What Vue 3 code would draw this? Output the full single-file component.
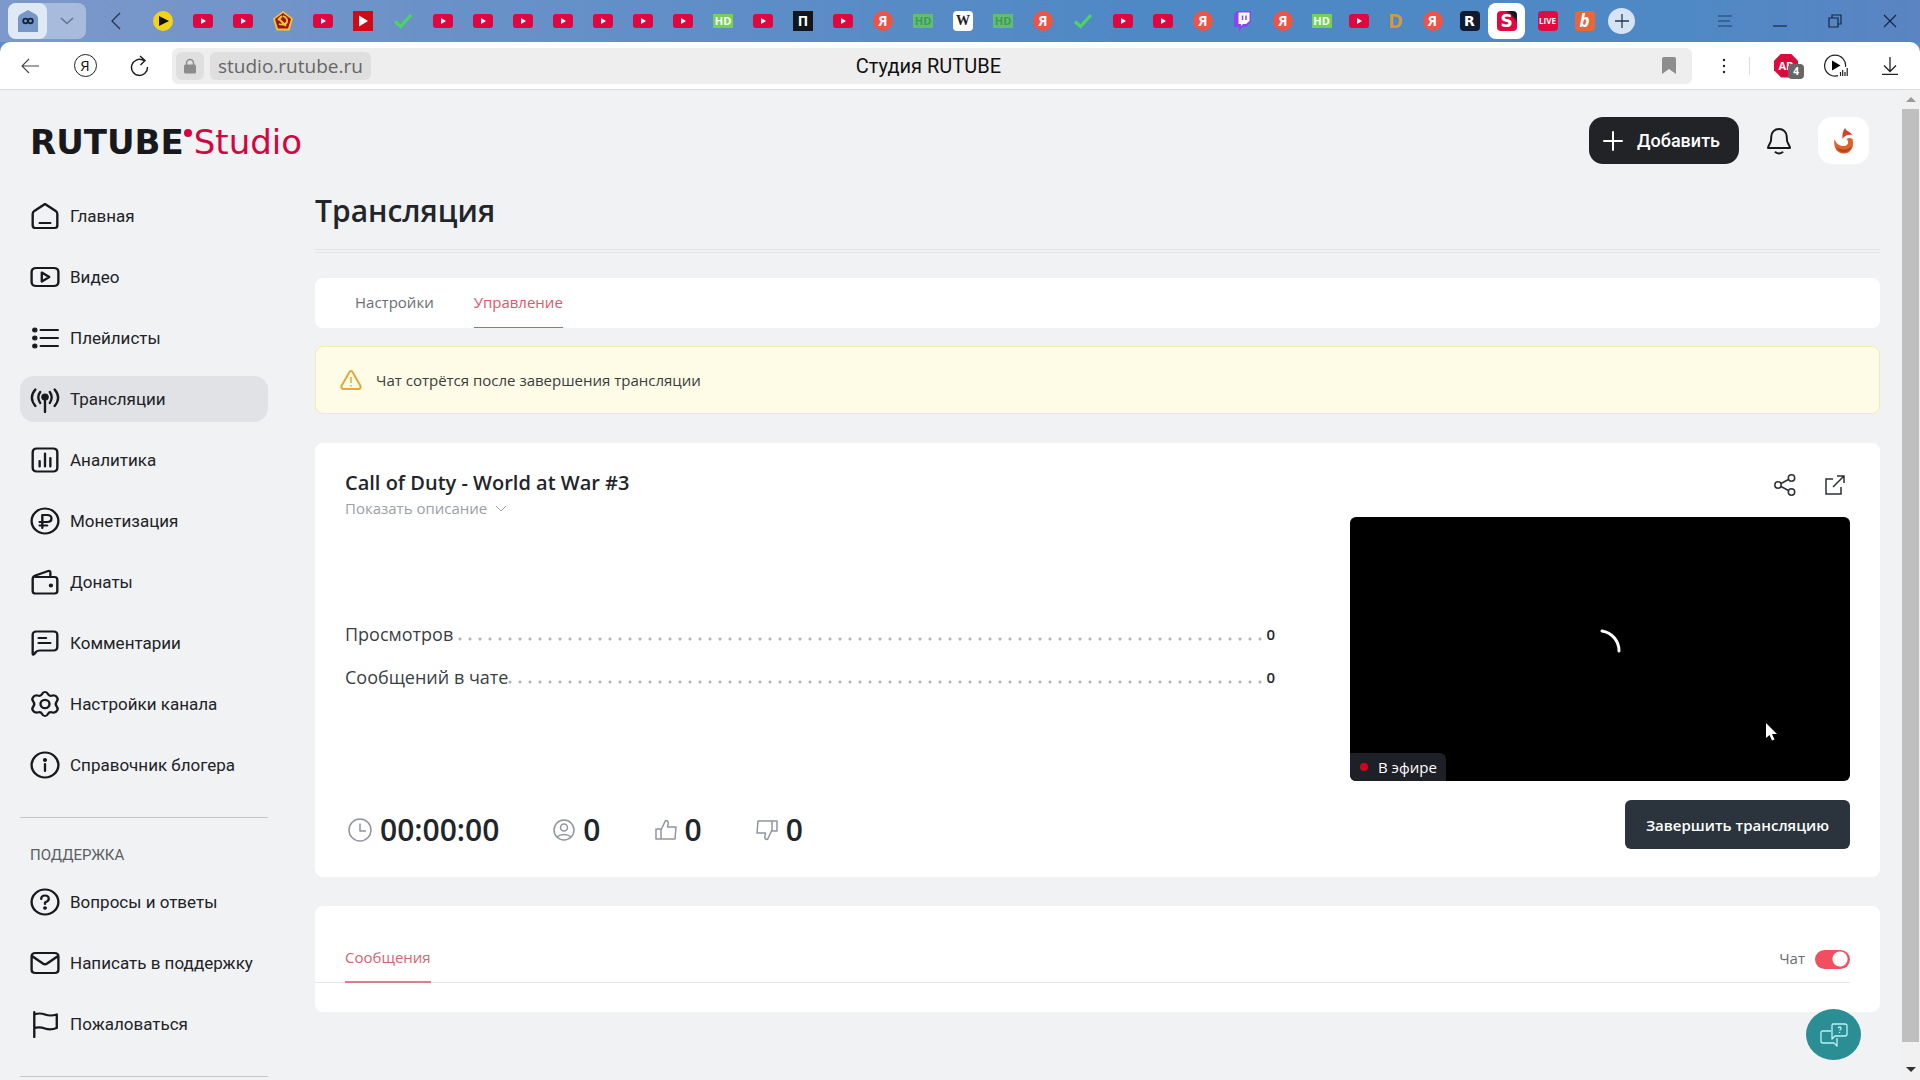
<!-- src/App.vue -->
<template>
  <div class="window">
    <!-- Browser tab strip -->
    <header class="tab-strip">
      <div class="tab-group">
        <button class="group-current" aria-label="Группа вкладок">
          <svg width="22" height="22" viewBox="0 0 22 22">
            <path d="M11 0 19 4.500Q21 6 21 8V22H1V8Q1 6 3 4.500Z" fill="#7798c6" />
            <circle cx="8.500" cy="11" r="2.300" fill="none" stroke="#16233c" stroke-width="1.800" />
            <circle cx="13.500" cy="11" r="2.300" fill="none" stroke="#16233c" stroke-width="1.800" />
          </svg>
        </button>
        <button class="group-more" aria-label="Список групп">
          <svg width="14" height="8" viewBox="0 0 14 8"><path d="M1 1 7 6.500 13 1" fill="none" stroke="#5f7596" stroke-width="1.600" /></svg>
        </button>
      </div>
      <button class="strip-back" aria-label="Прокрутить вкладки">
        <svg width="12" height="18" viewBox="0 0 12 18"><path d="M10 1 2 9l8 8" fill="none" stroke="#24364f" stroke-width="1.300" /></svg>
      </button>
      <nav class="tabs">
        <button
            v-for="(tab, idx) in tabs"
            :key="idx"
            class="tab"
            :class="{ narrow: idx > 28, active: tab === 'studio' }"
            :aria-label="'Вкладка ' + (idx + 1)"
        >
          <svg v-if="tab === 'yt'" width="20" height="14" viewBox="0 0 20 14">
            <rect width="20" height="14" rx="3" fill="#e0063f" />
            <path d="M8 4v6l5-3z" fill="#fff" />
          </svg>
          <svg v-else-if="tab === 'play'" width="20" height="20" viewBox="0 0 20 20">
            <circle cx="10" cy="10" r="10" fill="#f2d21b" />
            <path d="M6 5v10l10-5z" fill="#111" />
          </svg>
          <svg v-else-if="tab === 'ussr'" width="20" height="20" viewBox="0 0 20 20">
            <path d="M10 0 20 7.500 16.500 19.500H3.500L0 7.500z" fill="#f3c332" />
            <path d="M10 2 18 8 15 17.500H5L2 8z" fill="#a3141a" />
            <path d="M10 5q5 2 4 6-2 4-8 2M6 8l7 7M5 9l4-4" fill="none" stroke="#f5c936" stroke-width="1.800" />
          </svg>
          <svg v-else-if="tab === 'player'" width="20" height="20" viewBox="0 0 20 20">
            <rect width="20" height="20" fill="#cf0a15" />
            <path d="M6 4.500v11l9-5.500z" fill="#fff" />
          </svg>
          <svg v-else-if="tab === 'check'" width="20" height="16" viewBox="0 0 20 16">
            <path d="M2 8.500 7.500 13.500 18 2" fill="none" stroke="#4bd660" stroke-width="3.200" />
          </svg>
          <svg v-else-if="tab === 'twitch'" width="18" height="20" viewBox="0 0 18 20">
            <path d="M3 0H17V11L12 16H9L5 20V16H0V4z" fill="#8a45ee" />
            <path d="M4.500 1.500H15.500V10L12 13H9L7 15V13H4.500z" fill="#fff" />
            <path d="M8.500 4.500v4.500M12 4.500v4.500" stroke="#8a45ee" stroke-width="1.500" />
          </svg>
          <span v-else class="fav" :class="'fav-' + tab">{{ favText[tab] }}</span>
        </button>
      </nav>
      <button class="new-tab" aria-label="Новая вкладка">
        <svg width="14" height="14" viewBox="0 0 14 14"><path d="M7 0v14M0 7h14" stroke="#2a3a52" stroke-width="1.300" /></svg>
      </button>
      <div class="window-controls">
        <button aria-label="Меню">
          <svg width="14" height="12" viewBox="0 0 14 12"><path d="M0 1h14M0 6h12M0 11h14" stroke="#23406a" stroke-width="1.200" /></svg>
        </button>
        <button aria-label="Свернуть">
          <svg width="14" height="12" viewBox="0 0 14 12"><path d="M0 11h14" stroke="#16283f" stroke-width="1.200" /></svg>
        </button>
        <button aria-label="Восстановить">
          <svg width="14" height="14" viewBox="0 0 14 14"><path d="M1 4h9v9H1zM4 4V1h9v9h-3" fill="none" stroke="#16283f" stroke-width="1.200" /></svg>
        </button>
        <button aria-label="Закрыть">
          <svg width="14" height="14" viewBox="0 0 14 14"><path d="M1 1l12 12M13 1 1 13" stroke="#16283f" stroke-width="1.200" /></svg>
        </button>
      </div>
    </header>

    <!-- Browser toolbar -->
    <div class="toolbar-back">
      <div class="toolbar">
        <button class="tool" aria-label="Назад">
          <svg width="18" height="16" viewBox="0 0 18 16"><path d="M18 8H1M8 1 1 8l7 7" fill="none" stroke="#444" stroke-width="1.100" /></svg>
        </button>
        <button class="tool" aria-label="Яндекс"><span class="ya-ring">Я</span></button>
        <button class="tool" aria-label="Обновить">
          <svg width="20" height="22" viewBox="0 0 20 22"><path d="M17.500 12A8 8 0 1 1 13 5.200L15 5.500M10 1l5 4.500-4.500 4.500" fill="none" stroke="#222" stroke-width="1.500" /></svg>
        </button>
        <div class="address">
          <button class="lock" aria-label="Сведения о сайте">
            <svg width="14" height="16" viewBox="0 0 14 16">
              <path d="M3.500 8V5a3.500 3.500 0 0 1 7 0v3" fill="none" stroke="#8b8b8b" stroke-width="1.500" />
              <rect x="1" y="6.500" width="12" height="9" rx="1.500" fill="#8b8b8b" />
            </svg>
          </button>
          <button class="host">studio.rutube.ru</button>
          <span class="page-title">Студия RUTUBE</span>
          <button class="bookmark" aria-label="В закладки">
            <svg width="14" height="17" viewBox="0 0 14 17"><path d="M0 2q0-2 2-2h10q2 0 2 2v15l-7-5-7 5z" fill="#8d8d8d" /></svg>
          </button>
        </div>
        <button class="dots" aria-label="Ещё">
          <svg width="4" height="16" viewBox="0 0 4 16" fill="#222"><circle cx="2" cy="2" r="1.200" /><circle cx="2" cy="8" r="1.200" /><circle cx="2" cy="14" r="1.200" /></svg>
        </button>
        <span class="tool-divider"></span>
        <button class="adblock" aria-label="Adblock">
          <span class="adblock-sign">AB</span>
          <span class="adblock-count">4</span>
        </button>
        <button class="media" aria-label="Медиа">
          <svg width="24" height="24" viewBox="0 0 24 24">
            <path d="M14 21.700A10.500 10.500 0 1 1 21.500 13" fill="none" stroke="#222" stroke-width="1.200" />
            <path d="M8 6.500v10l8.500-5z" fill="#000" />
            <path d="M16.500 18v4M18.700 16v6M21 18v4M23.200 14v8" stroke="#222" stroke-width="1.200" />
          </svg>
        </button>
        <button class="download" aria-label="Загрузки">
          <svg width="16" height="18" viewBox="0 0 16 18"><path d="M8 0v14M2 8.500l6 6 6-6M0 17.300h16" fill="none" stroke="#222" stroke-width="1.300" /></svg>
        </button>
      </div>
    </div>

    <div class="viewport">
      <div class="site">
        <header class="site-header">
          <a class="logo" href="#"><b>RUTUBE</b><i class="logo-dot"></i><span>Studio</span></a>
          <div class="header-actions">
            <button class="add-button">
              <svg width="20" height="20" viewBox="0 0 20 20"><path d="M10 1v18M1 10h18" stroke="#fff" stroke-width="2" stroke-linecap="round" /></svg>
              Добавить
            </button>
            <button class="bell" aria-label="Уведомления">
              <svg width="26" height="28" viewBox="0 0 26 28" fill="none" stroke="#17191c" stroke-width="2" stroke-linecap="round" stroke-linejoin="round">
                <path d="M13 2C8.500 2 5.500 5.200 5.300 9.300L5 13.500C4.800 16 2.500 18 2 21H24C23.500 18 21.200 16 21 13.500L20.700 9.300C20.500 5.200 17.500 2 13 2Z" />
                <path d="M9.500 25.300Q13 27.800 16.500 25.300" />
              </svg>
            </button>
            <button class="avatar" aria-label="Профиль">
              <svg width="20" height="26" viewBox="0 0 20 26">
                <path d="M0.500 11C-1 21 4 25.500 10 25.500C17 25.500 20.500 19 18.500 11C16.500 9.500 14 10 12.500 11C15.500 13.500 14 18 10.500 18C6 18.500 2 16 0.500 11Z" fill="#e0622a" />
                <path d="M2 19C5 26 15 27 18.800 17C16 22 7 23 2 19Z" fill="#b8441c" />
                <path d="M8.500 11C8 6 9 3 11 0L12.500 2.500C15 3 16 5 18.500 6.500L14 7C11 7.500 10 9 8.500 11Z" fill="#cf432a" />
              </svg>
            </button>
          </div>
        </header>

        <div class="site-body">
          <aside class="sidebar">
            <nav class="menu">
              <a
                  v-for="item in menu"
                  :key="item.label"
                  class="menu-item"
                  :class="{ current: item.current }"
                  href="#"
              >
                <svg class="menu-icon" viewBox="0 0 28 28" preserveAspectRatio="none">
                  <path :d="item.line" />
                  <path v-if="item.fill" class="solid" :d="item.fill" />
                </svg>
                {{ item.label }}
              </a>
            </nav>
            <hr class="menu-rule" />
            <h2 class="menu-title">ПОДДЕРЖКА</h2>
            <nav class="menu">
              <a v-for="item in support" :key="item.label" class="menu-item" href="#">
                <svg class="menu-icon" viewBox="0 0 28 28" preserveAspectRatio="none">
                  <path :d="item.line" />
                  <path v-if="item.fill" class="solid" :d="item.fill" />
                </svg>
                {{ item.label }}
              </a>
            </nav>
            <hr class="menu-rule" />
          </aside>

          <main class="content">
            <h1>Трансляция</h1>
            <div class="double-rule"></div>

            <nav class="card page-tabs">
              <a href="#">Настройки</a>
              <a href="#" class="selected">Управление</a>
            </nav>

            <div class="notice">
              <svg width="22" height="20" viewBox="0 0 22 20" fill="none" stroke="#e0a93c" stroke-width="2" stroke-linejoin="round">
                <path d="M9.500 2Q11 0 12.500 2L20.500 16Q21 18.500 19 19H3Q1 18.500 1.500 16Z" />
                <path d="M11 7v6M11 15v1.500" stroke-width="1.500" />
              </svg>
              Чат сотрётся после завершения трансляции
            </div>

            <section class="card stream">
              <div class="stream-info">
                <h2>Call of Duty - World at War #3</h2>
                <button class="show-description">
                  Показать описание
                  <svg width="12" height="7" viewBox="0 0 12 7"><path d="M1 1l5 5 5-5" fill="none" stroke="#9a9fa8" /></svg>
                </button>
                <dl class="stats">
                  <div v-for="stat in stats" :key="stat.label" class="stat">
                    <dt>{{ stat.label }}</dt>
                    <dd>{{ stat.value }}</dd>
                  </div>
                </dl>
                <div class="meters">
                  <span class="meter">
                    <svg width="24" height="24" viewBox="0 0 24 24"><circle cx="12" cy="12" r="11" /><path d="M12 5.500V13h6" /></svg>
                    00:00:00
                  </span>
                  <span class="meter">
                    <svg width="22" height="22" viewBox="0 0 22 22"><circle cx="11" cy="11" r="10" /><circle cx="11" cy="8.500" r="3.500" /><path d="M3.800 18Q7 15.500 11 15.500T18.200 18" /></svg>
                    0
                  </span>
                  <span class="meter">
                    <svg width="22" height="22" viewBox="0 0 22 22"><path d="M1 10h5v10H1zM6 11l4.500-9.500Q14 1.500 13 5.500L12.500 8H21L20 20H6" /></svg>
                    0
                  </span>
                  <span class="meter">
                    <svg width="22" height="22" viewBox="0 0 22 22"><path d="M21 12h-5V2h5zM16 11l-4.500 9.500Q8 20.500 9 16.500L9.500 14H1L2 2h14" /></svg>
                    0
                  </span>
                </div>
              </div>

              <div class="stream-player">
                <div class="player-actions">
                  <button aria-label="Поделиться">
                    <svg width="22" height="22" viewBox="0 0 22 22"><circle cx="4" cy="11" r="3.200" /><circle cx="17.500" cy="4" r="3.200" /><circle cx="17.500" cy="18" r="3.200" /><path d="M7 9.500 14.500 5.500M7 12.500l7.500 4" /></svg>
                  </button>
                  <button aria-label="Открыть в новом окне">
                    <svg width="22" height="22" viewBox="0 0 22 22"><path d="M9 5H2v15h15v-7M9 13 20 2M13 2h7v7" /></svg>
                  </button>
                </div>
                <div class="player">
                  <svg class="spinner" width="46" height="46" viewBox="0 0 46 46"><path d="M25 5A20 20 0 0 1 42 25" fill="none" stroke="#fff" stroke-width="3" stroke-linecap="round" /></svg>
                  <span class="on-air">В эфире</span>
                  <svg class="pointer" width="12" height="18" viewBox="0 0 12 18"><path d="M1 0v15l3.500-3 2.500 5.500 2.500-1L7 11h5z" fill="#fff" /></svg>
                </div>
                <button class="finish">Завершить трансляцию</button>
              </div>
            </section>

            <section class="card messages">
              <div class="messages-bar">
                <a href="#" class="selected">Сообщения</a>
                <div class="chat-switch">
                  <label for="chat">Чат</label>
                  <input id="chat" v-model="chatEnabled" type="checkbox" />
                </div>
              </div>
            </section>
          </main>
        </div>
      </div>

      <div class="scrollbar">
        <i class="arrow-up"></i>
        <div class="thumb"></div>
        <i class="arrow-down"></i>
      </div>
    </div>

    <button class="help" aria-label="Помощь">
      <svg width="28" height="24" viewBox="0 0 28 24" fill="none" stroke="#b9f3f3" stroke-width="1.300" stroke-linejoin="round">
        <path d="M11 8H2.500Q1 8 1 9.500v8.500q0 2 2 2h11l3 3v-8" />
        <path d="M13 1h12q2 0 2 2v8q0 2-2 2H15l-3 3V3q0-2 1-2z" />
        <path d="M18 5q2-2 3 0 .3 1-1.500 2.500M19.500 9v1" />
      </svg>
    </button>
  </div>
</template>

<script setup>
import { ref } from 'vue'

// ─── BROWSER TABS ─────────────────────────────────────────────────────────────
const tabs = [
  'play', 'yt', 'yt', 'ussr', 'yt', 'player', 'check', 'yt', 'yt', 'yt',
  'yt', 'yt', 'yt', 'yt', 'hd', 'yt', 'pi', 'yt', 'ya', 'hddim',
  'wiki', 'hddim', 'ya', 'check', 'yt', 'yt', 'ya', 'twitch', 'ya',
  'hd', 'yt', 'dee', 'ya', 'rutube', 'studio', 'live', 'bee',
]

const favText = {
  hd: 'HD',
  hddim: 'HD',
  pi: 'П',
  ya: 'Я',
  wiki: 'W',
  dee: 'D',
  rutube: 'R',
  studio: 'S',
  live: 'LIVE',
  bee: 'b',
}

// ─── SIDEBAR ──────────────────────────────────────────────────────────────────
const ring = 'M14 1.500A12.500 12.500 0 1 1 14 26.500A12.500 12.500 0 1 1 14 1.500Z'

const menu = [
  { label: 'Главная', line: 'M14 2 24 9Q25.500 10 25.500 12V23.500Q25.500 26 23 26H5Q2.500 26 2.500 23.500V12Q2.500 10 4 9ZM9 21h10' },
  { label: 'Видео', line: 'M6 5H22Q26.500 5 26.500 9V19Q26.500 23 22 23H6Q1.500 23 1.500 19V9Q1.500 5 6 5ZM11 9.500 18 14 11 18.500Z' },
  {
    label: 'Плейлисты',
    line: 'M10 6H26M10 14H26M10 22H26',
    fill: 'M2.500 6a2 2 0 1 0 4 0a2 2 0 1 0-4 0M2.500 14a2 2 0 1 0 4 0a2 2 0 1 0-4 0M2.500 22a2 2 0 1 0 4 0a2 2 0 1 0-4 0',
  },
  {
    label: 'Трансляции',
    current: true,
    line: 'M14 13V27M9.500 7Q6 12 9.500 18M18.500 7Q22 12 18.500 18M5 4.500Q-1.500 12.500 5 21M23 4.500Q29.500 12.500 23 21',
    fill: 'M11 12a3 3 0 1 0 6 0a3 3 0 1 0-6 0',
  },
  { label: 'Аналитика', line: 'M6.500 2.500H21.500Q25.500 2.500 25.500 6.500V21.500Q25.500 25.500 21.500 25.500H6.500Q2.500 25.500 2.500 21.500V6.500Q2.500 2.500 6.500 2.500ZM9 15V20.500M14 7.500V20.500M19 12V20.500' },
  { label: 'Монетизация', line: ring + 'M11.500 21V8H16Q20 8 20 11.500T16 15H9M9 18.500H16' },
  {
    label: 'Донаты',
    line: 'M5 9H23Q25.500 9 25.500 12V23Q25.500 25.500 23 25.500H5Q2.500 25.500 2.500 23V11Q2.500 8.500 5 7.500L17 3Q19 2.500 19 4.500V9',
    fill: 'M18 17.500a1.500 1.500 0 1 0 3 0a1.500 1.500 0 1 0-3 0',
  },
  { label: 'Комментарии', line: 'M6 2.500H22Q25.500 2.500 25.500 6V17.500Q25.500 21.500 22 21.500H9Q7 21.500 5.500 23L4 25Q2.500 26.500 2.500 24.500V6Q2.500 2.500 6 2.500ZM8 9H15M8 14H19' },
  {
    label: 'Настройки канала',
    line: 'M14 2Q16 2 16.700 4Q18 6.500 21 5.500Q24 5 25.300 7.500Q26.500 9.500 25 11.300Q23 14 25 16.700Q26.500 18.500 25.300 20.500Q24 23 21 22.500Q18 21.500 16.700 24Q16 26 14 26T11.300 24Q10 21.500 7 22.500Q4 23 2.700 20.500Q1.500 18.500 3 16.700Q5 14 3 11.300Q1.500 9.500 2.700 7.500Q4 5 7 5.500Q10 6.500 11.300 4Q12 2 14 2ZM14 9.800A4.200 4.200 0 1 1 14 18.200A4.200 4.200 0 1 1 14 9.800Z',
  },
  {
    label: 'Справочник блогера',
    line: ring + 'M14 13V20',
    fill: 'M12.600 9a1.400 1.400 0 1 0 2.800 0a1.400 1.400 0 1 0-2.800 0',
  },
]

const support = [
  {
    label: 'Вопросы и ответы',
    line: ring + 'M10.500 11Q10.500 7.500 14 7.500T17.500 11Q17.500 13 14 14.500V16',
    fill: 'M12.700 20a1.300 1.300 0 1 0 2.600 0a1.300 1.300 0 1 0-2.600 0',
  },
  { label: 'Написать в поддержку', line: 'M5 4H23Q26.500 4 26.500 7.500V20.500Q26.500 24 23 24H5Q1.500 24 1.500 20.500V7.500Q1.500 4 5 4ZM2.500 7.500 12 14.500Q14 16 16 14.500L25.500 7.500' },
  { label: 'Пожаловаться', line: 'M4 2V27M4 4.500Q9 2.500 14 4.500T25 4.500V18Q19 20.500 14 18.500T4 18' },
]

// ─── STREAM ───────────────────────────────────────────────────────────────────
const stats = [
  { label: 'Просмотров', value: 0 },
  { label: 'Сообщений в чате', value: 0 },
]

const chatEnabled = ref(true)
</script>

<style>
body {
  margin: 0;
  background: #f1f2f4;
}
</style>

<style scoped>
.window {
  display: flex;
  flex-direction: column;
  min-height: 100vh;
  font-family: 'Open Sans', 'Noto Sans', sans-serif;
  color: #22262b;
}

button {
  display: flex;
  align-items: center;
  justify-content: center;
  padding: 0;
  border: none;
  background: none;
  font: inherit;
  color: inherit;
  cursor: pointer;
}

a {
  color: inherit;
  text-decoration: none;
}

svg {
  flex: none;
}

/* ─── TAB STRIP ────────────────────────────────────────────────────────────── */
.tab-strip {
  display: flex;
  align-items: center;
  height: 42px;
  padding: 0 10px 0 8px;
  background: linear-gradient(90deg, #7d98cb 0%, #6e93c8 18%, #5d8dc7 40%, #4e88c5 60%, #4f89c5 88%, #5a84c2 100%);
}

.tab-group {
  display: flex;
  height: 36px;
  border-radius: 8px;
  background: rgba(255, 255, 255, 0.35);
}
.tab-group button {
  width: 39px;
}
.tab-group .group-current {
  border-radius: 8px;
  background: #dfe9f5;
}

.strip-back {
  width: 40px;
  height: 36px;
  margin: 0 7px 0 10px;
}

.tabs {
  display: flex;
}
.tab {
  width: 40px;
  height: 36px;
}
.tab.narrow {
  width: 37px;
}
.tab.active {
  margin-right: 4px;
  border-radius: 8px;
  background: #fff;
}

.fav {
  width: 20px;
  height: 20px;
  font: 700 14px/20px 'Open Sans', sans-serif;
  text-align: center;
  color: #fff;
}
.fav-hd,
.fav-hddim {
  height: 14px;
  font-size: 11px;
  line-height: 14px;
  background: #78cf55;
}
.fav-hddim {
  background: #62bd70;
  color: #3f9a5c;
}
.fav-pi {
  background: #11161d;
}
.fav-ya {
  border-radius: 50%;
  background: #ee5347;
}
.fav-wiki {
  border-radius: 4px;
  background: #fff;
  color: #222;
  font-family: 'Liberation Serif', serif;
}
.fav-dee {
  color: #d69a35;
  font-size: 20px;
}
.fav-rutube {
  border-radius: 4px;
  background: #121a30;
  font-family: 'DejaVu Sans', sans-serif;
}
.fav-studio {
  border-radius: 4px;
  background: linear-gradient(45deg, #e0083f 70%, #14172c 80%);
  font-family: 'DejaVu Sans', sans-serif;
  font-size: 17px;
}
.fav-live {
  border-radius: 4px;
  background: #e30a3f;
  font-size: 8px;
}
.fav-bee {
  border-radius: 3px;
  background: #e8663a;
  font-size: 17px;
  font-style: italic;
}

.new-tab {
  width: 27px;
  height: 26px;
  margin-left: 5px;
  border-radius: 50%;
  background: #d5e3f3;
}

.window-controls {
  display: flex;
  gap: 15px;
  margin-left: auto;
}
.window-controls button {
  width: 40px;
  height: 36px;
}

/* ─── TOOLBAR ──────────────────────────────────────────────────────────────── */
.toolbar-back {
  background: #5b8cc5;
}
.toolbar {
  display: flex;
  align-items: center;
  height: 47px;
  padding: 0 14px 0 10px;
  border-bottom: 1px solid #dcdcdc;
  border-radius: 10px 10px 0 0;
  background: #fff;
}
.tool {
  width: 40px;
  height: 36px;
  margin-right: 15px;
}
.ya-ring {
  width: 21px;
  height: 21px;
  border: 1px solid #222;
  border-radius: 50%;
  font: 15px/21px 'Open Sans', sans-serif;
  color: #111;
}

.address {
  display: flex;
  flex: 1;
  align-items: center;
  height: 36px;
  margin-left: -3px;
  padding: 0 16px 0 4px;
  border-radius: 6px;
  background: #eee;
}
.lock,
.host {
  height: 28px;
  border-radius: 6px;
  background: #dfdfdf;
}
.lock {
  width: 28px;
}
.host {
  margin-left: 6px;
  padding: 0 8px;
  font-size: 19px;
  color: #666;
}
.page-title {
  flex: 1;
  padding-right: 176px;
  font: 20px/28px Roboto, sans-serif;
  text-align: center;
  color: #111;
}

.dots {
  width: 24px;
  height: 36px;
  margin-left: 20px;
}
.tool-divider {
  width: 1px;
  height: 18px;
  margin: 0 24px 0 13px;
  background: #ddd;
}

.adblock {
  position: relative;
  width: 30px;
  height: 26px;
}
.adblock-sign {
  width: 24px;
  height: 24px;
  margin-right: 6px;
  background: #dc0b3c;
  clip-path: polygon(30% 0, 70% 0, 100% 30%, 100% 70%, 70% 100%, 30% 100%, 0 70%, 0 30%);
  font: 700 11px/24px 'Open Sans', sans-serif;
  color: #fff;
}
.adblock-count {
  position: absolute;
  right: 0;
  bottom: 0;
  width: 16px;
  height: 15px;
  border-radius: 4px;
  background: #666;
  font: 700 10px/15px 'Open Sans', sans-serif;
  color: #fff;
}
.media {
  width: 32px;
  height: 36px;
  margin: 0 22px 0 16px;
}
.download {
  width: 32px;
  height: 36px;
}

/* ─── SITE SHELL ───────────────────────────────────────────────────────────── */
.viewport {
  display: flex;
  flex: 1;
  background: #f1f2f4;
}
.site {
  flex: 1;
  min-width: 0;
}
.site-header {
  display: flex;
  align-items: center;
  justify-content: space-between;
  padding: 27px 32px 0 30px;
}

.logo {
  display: flex;
  align-items: center;
  padding-top: 3px;
  font: 34px/44px 'DejaVu Sans', sans-serif;
  color: #17191d;
}
.logo-dot {
  width: 8px;
  height: 8px;
  margin: 0 2px 18px 0;
  border-radius: 50%;
  background: #d3073f;
}
.logo span {
  color: #d3073f;
}

.header-actions {
  display: flex;
  align-items: center;
}
.add-button {
  gap: 14px;
  height: 47px;
  padding: 0 19px 0 14px;
  border-radius: 14px;
  background: #222327;
  font: 500 18px/24px Roboto, sans-serif;
  color: #fff;
}
.bell {
  width: 40px;
  height: 47px;
  margin: 0 19px 0 20px;
}
.avatar {
  width: 51px;
  height: 47px;
  border-radius: 14px;
  background: #fff;
}

.site-body {
  display: flex;
}

/* ─── SIDEBAR ──────────────────────────────────────────────────────────────── */
.sidebar {
  flex: none;
  box-sizing: border-box;
  width: 315px;
  padding: 29px 47px 0 20px;
  font-family: Roboto, sans-serif;
}
.menu {
  display: flex;
  flex-direction: column;
  gap: 15px;
}
.menu-item {
  display: flex;
  align-items: center;
  gap: 10px;
  height: 46px;
  padding-left: 10px;
  border-radius: 14px;
  font-size: 17px;
  white-space: nowrap;
  color: #212327;
}
.menu-item.current {
  background: #e0e2e6;
}
.menu-icon {
  width: 30px;
  height: 28px;
  fill: none;
  stroke: #17191c;
  stroke-width: 2.2;
  stroke-linecap: round;
  stroke-linejoin: round;
}
.menu-icon .solid {
  fill: #17191c;
  stroke-width: 1;
}
.menu-rule {
  height: 1px;
  margin: 29px 0 0;
  border: none;
  background: #c3c5c8;
}
.menu-title {
  margin: 26px 0 13px 10px;
  font-size: 15px;
  font-weight: 400;
  line-height: 22px;
  color: #5b5e63;
}

/* ─── CONTENT ──────────────────────────────────────────────────────────────── */
.content {
  flex: 1;
  min-width: 0;
  padding: 29px 21px 0 0;
}
h1 {
  margin: 0;
  font-size: 30px;
  font-weight: 600;
  line-height: 36px;
}
.double-rule {
  height: 2px;
  margin: 20px 0 25px;
  border-top: 1px solid #e1e3e6;
  border-bottom: 1px solid #e1e3e6;
}
.card {
  border-radius: 8px;
  background: #fff;
}

.page-tabs {
  display: flex;
  gap: 40px;
  padding: 0 40px;
  font-size: 15px;
  color: #6a6e74;
}
.page-tabs a {
  border-bottom: 1px solid transparent;
  line-height: 49px;
}
.page-tabs .selected {
  border-color: #e0566c;
  color: #e0566c;
}

.notice {
  display: flex;
  align-items: center;
  gap: 14px;
  height: 66px;
  margin: 18px 0 29px;
  padding: 0 24px;
  border: 1px solid #f3ecb9;
  border-radius: 8px;
  background: #fefbe6;
  font-size: 15px;
  color: #3b3d3c;
}

/* ─── STREAM CARD ──────────────────────────────────────────────────────────── */
.stream {
  display: flex;
  gap: 75px;
  padding: 26px 30px 28px;
}
.stream-info {
  display: flex;
  flex: 1;
  flex-direction: column;
  align-items: flex-start;
}
.stream-info h2 {
  margin: 0;
  font-size: 20px;
  font-weight: 600;
  line-height: 28px;
}
.show-description {
  gap: 8px;
  font-size: 15px;
  line-height: 22px;
  color: #9a9fa8;
}

.stats {
  display: flex;
  flex-direction: column;
  gap: 19px;
  width: 100%;
  margin: 103px 0 0;
}
.stat {
  display: flex;
  align-items: center;
  line-height: 24px;
  background: radial-gradient(circle at 5px 17px, #b4b7bb 1px, transparent 2px) right / 10px 24px repeat-x;
}
.stat dt {
  background: #fff;
  font-size: 18px;
  color: #3b3f45;
}
.stat dd {
  margin: 0 0 0 auto;
  padding-left: 2px;
  background: #fff;
  font-size: 15px;
  font-weight: 600;
}

.meters {
  display: flex;
  gap: 54px;
  margin-top: auto;
  padding-left: 3px;
  font-size: 30px;
  font-weight: 600;
  line-height: 38px;
}
.meter {
  display: flex;
  align-items: center;
  gap: 8px;
}
.meter svg {
  fill: none;
  stroke: #9095a0;
  stroke-width: 1.5;
  stroke-linejoin: round;
}

.stream-player {
  flex: 0 0 500px;
}
.player-actions {
  display: flex;
  justify-content: flex-end;
  gap: 20px;
  padding-bottom: 16px;
}
.player-actions button {
  width: 30px;
  height: 32px;
}
.player-actions svg {
  fill: none;
  stroke: #2c3138;
  stroke-width: 1.5;
}
.player {
  position: relative;
  display: flex;
  align-items: flex-end;
  aspect-ratio: 500 / 264;
  border-radius: 6px;
  background: #000;
  overflow: hidden;
}
.spinner {
  position: absolute;
  top: 50%;
  left: 50%;
  transform: translate(-50%, -50%);
}
.pointer {
  position: absolute;
  top: 78%;
  left: 83%;
}
.on-air {
  display: flex;
  align-items: center;
  gap: 10px;
  padding: 0 9px 0 10px;
  border-top-right-radius: 6px;
  background: #1e2027;
  font-size: 15px;
  line-height: 28px;
  color: #fff;
}
.on-air::before {
  content: '';
  width: 8px;
  height: 8px;
  border-radius: 50%;
  background: #d8001f;
}
.finish {
  height: 49px;
  margin: 19px 0 0 auto;
  padding: 0 21px;
  border-radius: 6px;
  background: #2b343c;
  font-size: 15px;
  font-weight: 600;
  color: #fff;
}

/* ─── MESSAGES ─────────────────────────────────────────────────────────────── */
.messages {
  margin-top: 29px;
  padding: 27px 30px 29px 0;
}
.messages-bar {
  display: flex;
  align-items: center;
  justify-content: space-between;
  padding-left: 30px;
  border-bottom: 1px solid #e5e7e9;
  font-size: 15px;
}
.messages-bar .selected {
  margin-bottom: -1px;
  border-bottom: 2px solid #dc7d8c;
  line-height: 48px;
  color: #dc5f73;
}
.chat-switch {
  display: flex;
  align-items: center;
  gap: 10px;
  color: #6a6e74;
}
.chat-switch input {
  width: 35px;
  height: 19px;
  margin: 3px 0 0;
  border-radius: 10px;
  background: radial-gradient(circle at 25px 9px, #fff 7px, #f04f60 8px);
  appearance: none;
  cursor: pointer;
}

/* ─── HELP BUTTON ──────────────────────────────────────────────────────────── */
.help {
  position: fixed;
  right: 59px;
  bottom: 20px;
  width: 55px;
  height: 51px;
  border-radius: 50%;
  background: #2b8e94;
}

/* ─── SCROLLBAR ────────────────────────────────────────────────────────────── */
.scrollbar {
  display: flex;
  flex-direction: column;
  align-items: center;
  width: 19px;
  background: #f1f1f1;
}
.arrow-up,
.arrow-down {
  margin: 7px 0;
  border: 5px solid transparent;
}
.arrow-up {
  border-top: none;
  border-bottom-color: #9a9a9a;
}
.arrow-down {
  margin: 25px 0 8px;
  border-bottom: none;
  border-top-color: #333;
}
.thumb {
  flex: 1;
  width: 17px;
  background: #bfbfbf;
}
</style>
